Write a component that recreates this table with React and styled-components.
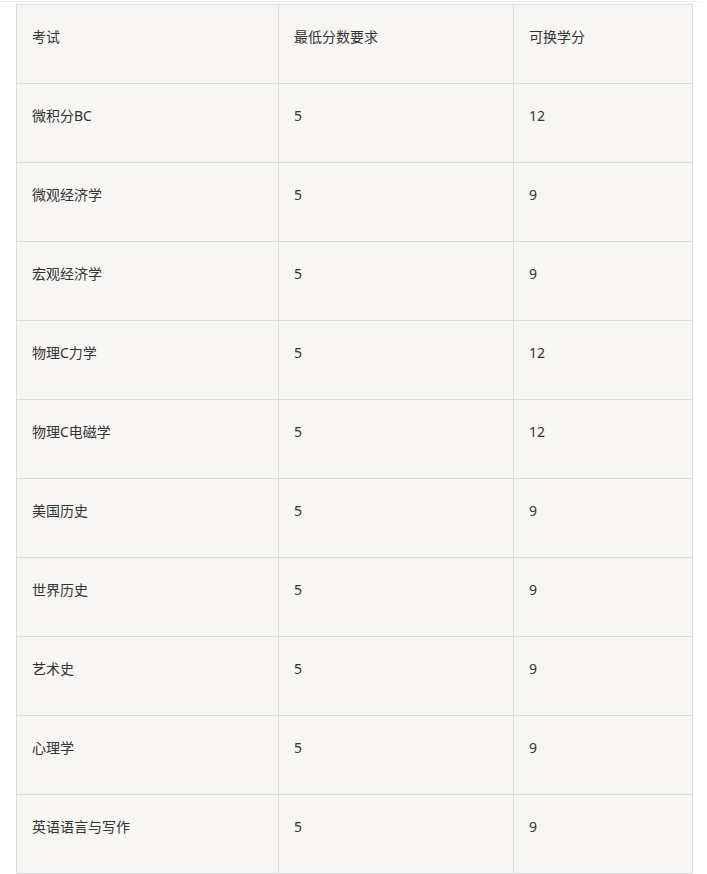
import React from "react";
import styled, { createGlobalStyle } from "styled-components";

const rows = [
  ["微积分BC", "5", "12"],
  ["微观经济学", "5", "9"],
  ["宏观经济学", "5", "9"],
  ["物理C力学", "5", "12"],
  ["物理C电磁学", "5", "12"],
  ["美国历史", "5", "9"],
  ["世界历史", "5", "9"],
  ["艺术史", "5", "9"],
  ["心理学", "5", "9"],
  ["英语语言与写作", "5", "9"],
];

const GlobalStyle = createGlobalStyle`
  body {
    margin: 0;
    background: #fff;
    font-family: "Noto Sans", "Noto Sans CJK SC", sans-serif;
  }
`;

const Page = styled.div`
  padding-top: 1px;
`;

const Rule = styled.div`
  height: 1px;
  background: #ececec;
  margin: 0 4px 2px 0;
`;

const Table = styled.table`
  margin-left: 16px;
  width: 676px;
  border-collapse: collapse;
  table-layout: fixed;
  background: #f7f6f3;
  color: #333;
  font-size: 14px;
`;

const Cell = styled.td`
  border: 1px solid #dcdcdc;
  height: 79px;
  box-sizing: border-box;
  padding: 20px 15px 0 15px;
  vertical-align: top;
  line-height: 24px;
  font-weight: normal;
  text-align: left;
`;

const App = () => {
  return (
    <Page>
      <GlobalStyle />
      <Rule />
      <Table>
        <colgroup>
          <col style={{ width: 262 }} />
          <col style={{ width: 235 }} />
          <col style={{ width: 179 }} />
        </colgroup>
        <thead>
          <tr>
            <Cell as="th">考试</Cell>
            <Cell as="th">最低分数要求</Cell>
            <Cell as="th">可换学分</Cell>
          </tr>
        </thead>
        <tbody>
          {rows.map((r, i) => (
            <tr key={i}>
              <Cell>{r[0]}</Cell>
              <Cell>{r[1]}</Cell>
              <Cell>{r[2]}</Cell>
            </tr>
          ))}
        </tbody>
      </Table>
    </Page>
  );
};

export default App;
